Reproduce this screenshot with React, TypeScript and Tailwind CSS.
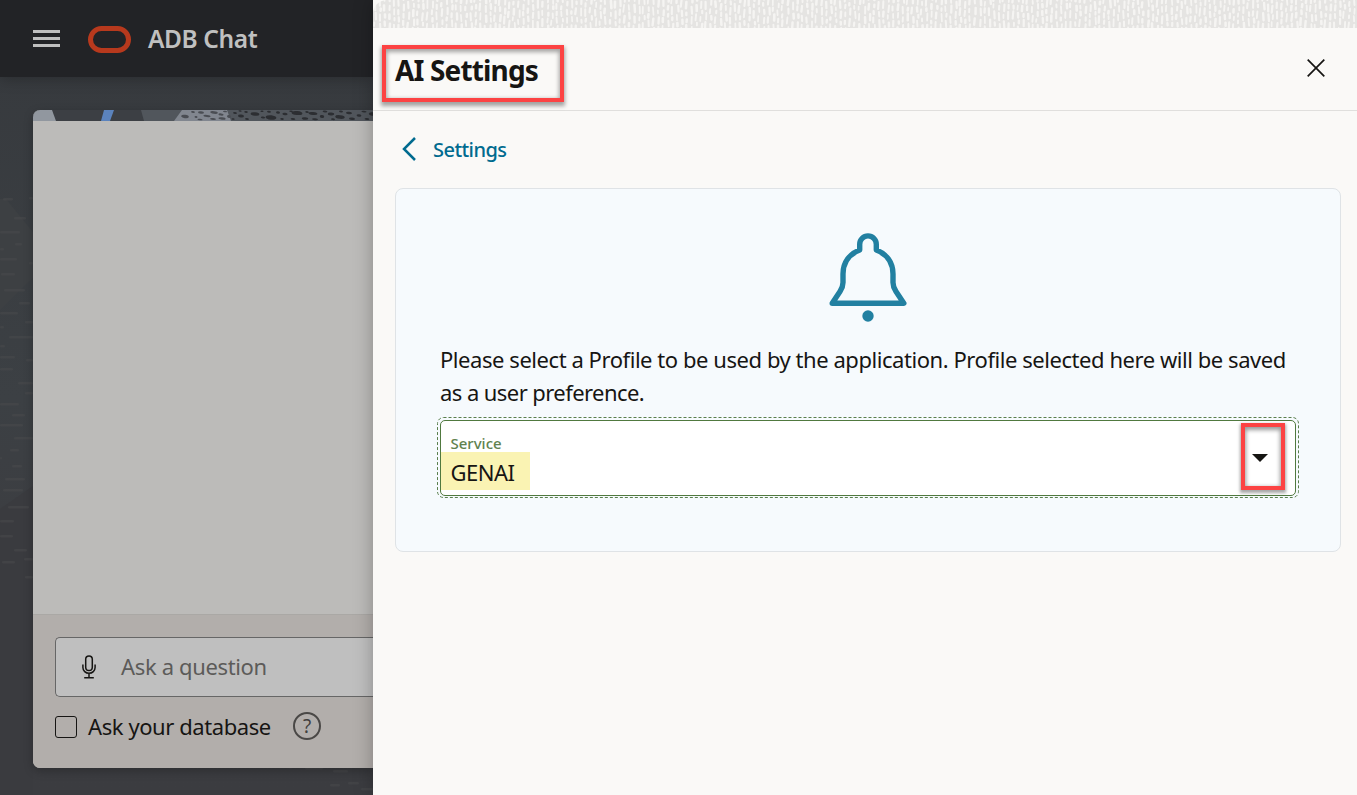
import React from "react";

function seeded(seed: number) {
  let s = seed;
  return () => {
    s = (s * 16807) % 2147483647;
    return s / 2147483647;
  };
}

function makeStrokes() {
  const rnd = seeded(42);
  const out: { x: number; y: number; h: number; w: number; r: number }[] = [];
  for (let col = 0; col < 205; col++) {
    let y = -6 + rnd() * 7;
    while (y < 30) {
      const h = 4.5 + rnd() * 5;
      out.push({ x: col * 4.8 + rnd() * 1.8, y, h, w: 1.7 + rnd() * 0.9, r: rnd() * 12 - 5 });
      y += h + 0.4 + rnd() * 2;
    }
  }
  return out;
}

type Pebble = [number, number, number, number];

const pebbles: Pebble[] = [
  [152, 6.5, 3.8, 1.7], [160, 2, 2, 1], [163, 7, 1.5, 0.9], [168, 2.5, 3, 1.2], [174, 6, 3.6, 1.1],
  [167, 9.5, 2.6, 0.8], [181, 2.5, 3.8, 1.3], [180, 9, 3, 1], [188, 4.5, 2.6, 1.1], [192, 1.5, 2, 0.8],
  [189, 8.5, 3.6, 1.2], [196, 6.5, 2, 1.4],
  [202, 3, 2, 1], [200, 9, 1.6, 0.8], [208, 6, 3, 1.5], [207, 1, 1.6, 0.7], [213, 2, 1.8, 0.9],
  [214, 9, 2, 0.9], [222, 4, 4.4, 1.7], [229, 1.3, 1.5, 0.8], [230, 7.5, 2.2, 1], [238, 7.5, 5.4, 2.2],
  [236, 1.8, 2, 1], [245, 2.5, 2, 1.3], [249, 9, 1.8, 0.9], [252, 4, 2.6, 1.3], [258, 1.3, 1.8, 0.8],
  [264, 3, 5.4, 2], [260, 9, 2.4, 1], [272, 8.5, 3.2, 1.3], [274, 2, 1.8, 1], [280, 3.5, 4.4, 1.5],
  [282, 9.3, 3, 1], [289, 6.5, 2.2, 1.5], [292, 1.5, 2.4, 0.9], [298, 4, 3.2, 1.4], [300, 9.2, 2, 0.9],
  [307, 7, 4.8, 1.8], [308, 1.5, 2, 0.9], [316, 3, 3, 1.2], [319, 8.8, 3, 1.2], [326, 5.5, 2.4, 1.3],
  [331, 1.6, 2.6, 0.9], [334, 9, 2.4, 1], [339, 4, 3.2, 1.8],
];

const strokes = makeStrokes();

const dashes: [number, number, number][] = [
  [3, 199, 10], [29, 198, 4], [14, 218, 12], [0, 232, 20], [15, 244, 7], [0, 249, 4],
  [0, 259, 17], [29, 263, 4], [1, 274, 14], [4, 290, 21], [19, 303, 11], [0, 313, 18],
  [25, 322, 8], [0, 327, 4], [9, 337, 24], [0, 346, 5], [0, 357, 15], [26, 360, 7],
  [0, 369, 13], [18, 383, 15], [25, 393, 8], [0, 404, 19], [12, 415, 13], [0, 425, 23],
  [14, 438, 19], [10, 450, 9], [0, 458, 2], [12, 466, 10], [5, 479, 20], [3, 490, 20],
  [8, 507, 21], [0, 521, 14], [0, 536, 13], [14, 550, 13], [24, 559, 9], [2, 562, 13],
  [25, 577, 8], [288, 767, 4], [305, 768, 18], [333, 771, 15], [330, 785, 10],
  [348, 783, 11], [361, 789, 12],
];

function Backdrop() {
  return (
    <svg className="absolute inset-0" width="373" height="795" aria-hidden="true">
      <defs>
        <linearGradient id="bd" x1="0" y1="0" x2="0" y2="1">
          <stop offset="0" stopColor="#36393d" />
          <stop offset="0.5" stopColor="#3c4044" />
          <stop offset="0.72" stopColor="#3c3d41" />
          <stop offset="1" stopColor="#3b3c40" />
        </linearGradient>
      </defs>
      <rect width="373" height="795" fill="url(#bd)" />
      <path d="M6 199 33 232V278L0 310V199z" fill="#3d4043" />
      <path d="M0 509 33 486V795H0z" fill="#3a3b3f" />
      <g fill="#4a4b4d" opacity="0.5">
        {dashes.map(([x, y, w], i) => (
          <rect key={i} x={x} y={y - 1} width={w} height="2.4" rx="1.2" />
        ))}
      </g>
    </svg>
  );
}

function AppBar() {
  return (
    <header className="relative flex h-[77px] shrink-0 items-center bg-[#222326] pl-[33px] shadow-[0_1px_14px_rgba(0,0,0,0.28)]">
      <div className="flex w-[27px] flex-col gap-[4px]">
        <span className="h-[3px] bg-[#bfbfbf]" />
        <span className="h-[3px] bg-[#bfbfbf]" />
        <span className="h-[3px] bg-[#bfbfbf]" />
      </div>
      <div className="ml-[28px] mt-[1px] h-[27px] w-[43px] rounded-full border-[5px] border-[#b7391d]" />
      <span className="ml-[17px] mt-[1px] whitespace-nowrap text-[24.5px] font-semibold leading-[34px] tracking-[-0.4px] text-[#c0c0c0]">
        ADB Chat
      </span>
    </header>
  );
}

function BannerArt() {
  return (
    <svg className="block shrink-0" width="340" height="11" aria-hidden="true">
      <rect width="340" height="11" fill="#3c3f44" />
      <path d="M0 0H19L23 11H0z" fill="#91979f" />
      <path d="M71 0H81L77 11H68z" fill="#5b83bd" />
      <path d="M108 0H340V11H111z" fill="#51565c" />
      <path d="M149 0H194L198 11H141z" fill="#81868f" />
      {pebbles.map(([x, y, rx, ry], i) => (
        <ellipse
          key={i}
          cx={x}
          cy={y}
          rx={rx}
          ry={ry}
          fill={x < 197 ? "#4a4d53" : "#2c2e32"}
          transform={`rotate(6 ${x} ${y})`}
        />
      ))}
    </svg>
  );
}

function ChatCard() {
  return (
    <section className="relative ml-[33px] mt-[33px] flex h-[658px] w-[340px] flex-col overflow-hidden rounded-l-[7px] bg-[#bcbbb9] shadow-[0_3px_10px_rgba(0,0,0,0.25)]">
      <BannerArt />
      <div className="flex-1" />
      <div className="h-[154px] border-t border-[#aaa8a5] bg-[#b2aeab] pl-[22px] pt-[22px]">
        <div className="flex h-[60px] items-center rounded-l-[5px] border border-r-0 border-[#666] bg-[#bfbfbf] pl-[26px]">
          <svg className="-mt-[1px]" width="14" height="24" viewBox="0 0 14 24" fill="none" stroke="#161513" strokeWidth="1.5" aria-hidden="true">
            <rect x="3.7" y="1" width="6.600" height="14.500" rx="3.300" />
            <path d="M.9 9.500v3a6.100 5.800 0 0 0 12.200 0v-3M7 18.300V22.500M2.200 22.700H11.800" />
          </svg>
          <span className="-mt-[2px] ml-[25px] text-[22px] leading-[30px] tracking-[-0.35px] text-[#5c5b59]">
            Ask a question
          </span>
        </div>
        <div className="mt-[13px] flex h-[32px] items-center">
          <span className="mt-[1px] h-[22px] w-[22px] rounded-[3px] border border-[#161513]" />
          <span className="-mt-[1px] ml-[11px] w-[183px] whitespace-nowrap text-[22px] leading-[30px] tracking-[-0.42px] text-[#161513]">
            Ask your database
          </span>
          <span className="ml-[22px] flex h-[28px] w-[28px] items-center justify-center rounded-full border-2 border-[#4a4846] text-[19px] leading-none text-[#413f3d]">
            ?
          </span>
        </div>
      </div>
    </section>
  );
}

function TextureStrip() {
  return (
    <svg className="block shrink-0 bg-[#e5e4e2]" width="984" height="28" aria-hidden="true">
      <path d="M0 0H12Q2 2 0 12z" fill="#faf9f7" />
      <g fill="#faf9f7" opacity="0.8">
        {strokes.map((s, i) => (
          <rect
            key={i}
            x={s.x}
            y={s.y}
            width={s.w}
            height={s.h}
            rx="1.1"
            transform={`rotate(${s.r} ${s.x} ${s.y})`}
          />
        ))}
      </g>
    </svg>
  );
}

function BellIcon() {
  return (
    <svg className="mx-auto block" width="80" height="90" viewBox="0 0 80 90" fill="none" aria-hidden="true">
      <path
        d="M31.700 18V12.200a8.300 8.300 0 0 1 16.600 0V18C58.500 22 65 30.500 65 42v8.500c0 3.500 1 6 3 9L75.800 71.200H4.200L12 59.500c2-3 3-5.500 3-9V42c0-11.500 6.500-20 16.700-24z"
        stroke="#2280a1"
        strokeWidth="5.400"
        strokeLinejoin="round"
      />
      <circle cx="40" cy="84" r="5.700" fill="#2280a1" />
    </svg>
  );
}

function ServiceSelect() {
  return (
    <div className="relative -ml-[3px] mt-[8px] h-[81px] w-[862px]">
      <svg className="absolute inset-0" width="862" height="81" fill="none" aria-hidden="true">
        <rect x="0.5" y="0.5" width="861" height="80" rx="6" stroke="#5a7f4d" strokeDasharray="3 2" />
      </svg>
      <div className="relative ml-[3px] flex h-[76px] w-[856px] translate-y-[3px] rounded-[5px] border border-[#50793f] bg-white">
        <div className="flex flex-col pt-[14px]">
          <span className="pl-[9.5px] text-[15px] font-medium leading-[17px] text-[#61824f]">Service</span>
          <span className="h-[38px] w-[89px] bg-[#faf3b3] pl-[9.5px] text-[22px] leading-[40px] tracking-[-0.5px] text-[#161513]">
            GENAI
          </span>
        </div>
        <div className="ml-auto mr-[10px] mt-[2px] flex h-[67px] w-[44px] items-center justify-center border-[4px] border-[#fc4343] shadow-[0_2px_3px_1px_rgba(0,0,0,0.35),inset_0_2px_4px_1px_rgba(0,0,0,0.4)]">
          <svg className="-ml-[7px] mt-[2px]" width="16" height="8" viewBox="0 0 16 8" aria-hidden="true">
            <path d="M0 0H16L8 8z" fill="#161513" />
          </svg>
        </div>
      </div>
    </div>
  );
}

function SettingsDrawer() {
  return (
    <aside className="relative z-10 flex w-[984px] flex-col bg-[#faf9f7] shadow-[0_0_18px_rgba(0,0,0,0.28)]">
      <TextureStrip />
      <div className="flex h-[83px] shrink-0 items-start border-b border-[#e0dfdd] pl-[9px] pt-[17px]">
        <h1 className="h-[57px] w-[182px] whitespace-nowrap border-[4px] border-[#fc4343] pl-[9px] text-[28px] font-bold leading-[43px] tracking-[-0.85px] text-[#161513] shadow-[0_3px_4px_1px_rgba(0,0,0,0.35),inset_0_2px_4px_1px_rgba(0,0,0,0.35)]">
          AI Settings
        </h1>
        <svg className="ml-auto mr-[31px] mt-[13px]" width="20" height="20" viewBox="0 0 20 20" fill="none" stroke="#161513" strokeWidth="1.7" aria-hidden="true">
          <path d="M1.700 1.700 18.300 18.300M18.300 1.700 1.700 18.300" />
        </svg>
      </div>
      <div className="flex h-[77px] shrink-0 items-center pl-[29px]">
        <svg className="-mt-[1px]" width="14" height="24" viewBox="0 0 14 24" fill="none" stroke="#006b8f" strokeWidth="2.5" aria-hidden="true">
          <path d="M13 1 2 12 13 23" />
        </svg>
        <span className="ml-[17px] text-[20px] font-medium leading-[28px] tracking-[-0.55px] text-[#006b8f]">
          Settings
        </span>
      </div>
      <section className="ml-[22px] h-[364px] w-[946px] rounded-[8px] border border-[#dfe3e6] bg-[#f6fafd] pl-[44px] pr-[41px] pt-[43px]">
        <div className="-ml-[3px]">
          <BellIcon />
        </div>
        <p className="mt-[21px] whitespace-nowrap text-[22px] leading-[33px] tracking-[-0.445px] text-[#161513]">
          <span className="block">
            Please select a Profile to be used by the application. Profile selected here will be saved
          </span>
          <span className="block tracking-[-0.57px]">as a user preference.</span>
        </p>
        <ServiceSelect />
      </section>
    </aside>
  );
}

export default function App() {
  return (
    <div className="flex h-[795px] w-[1357px] overflow-hidden bg-[#36393d] font-['Noto_Sans',sans-serif]">
      <main className="relative flex w-[373px] shrink-0 flex-col">
        <Backdrop />
        <AppBar />
        <ChatCard />
      </main>
      <SettingsDrawer />
    </div>
  );
}
